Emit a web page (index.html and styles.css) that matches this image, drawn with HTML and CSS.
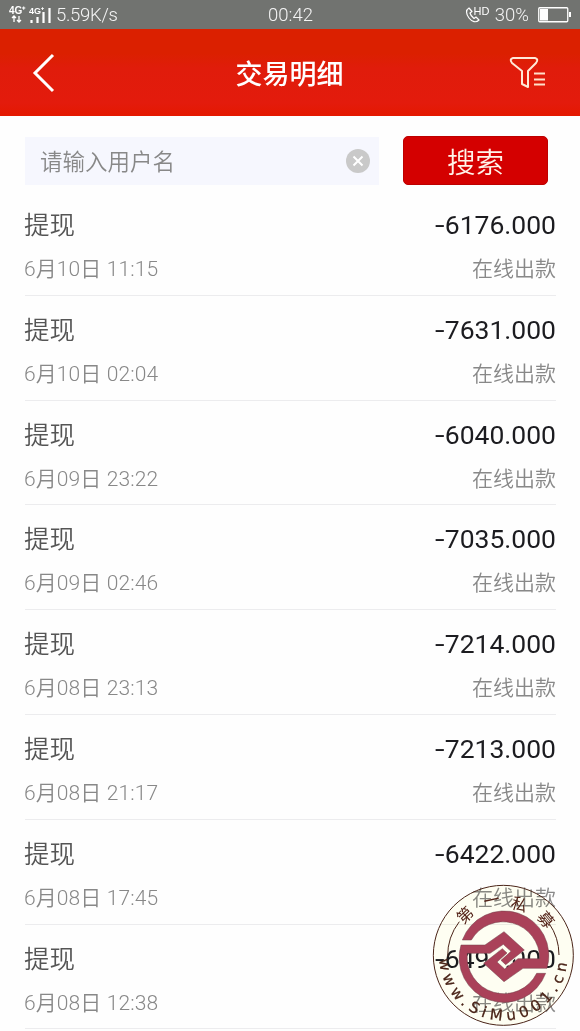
FILE: index.html
```html
<!DOCTYPE html>
<html lang="zh-CN">
<head>
<meta charset="utf-8">
<title>交易明细</title>
<link rel="stylesheet" href="styles.css">
</head>
<body>
<div class="screen">
  <div class="status">
    <div class="status-left">
      <svg class="signal" width="42" height="20" viewBox="0 0 42 20">
        <text class="g4" x="0" y="9">4G⁺</text>
        <text class="g4 g4-small" x="20" y="9">4G⁺</text>
        <path d="M5 11v6M3 13l2-2 2 2M10 11v6M8 15l2 2 2-2" stroke="#fff" stroke-width="1.300" fill="none"/>
        <path d="M22.500 15v3M28.500 12v6M34.500 7v11M40.500 3v15" stroke="#fff" stroke-width="2.200" fill="none"/>
      </svg>
      <span class="speed">5.59K/s</span>
    </div>
    <span class="clock">00:42</span>
    <div class="status-right">
      <svg class="call" width="24" height="18" viewBox="0 0 24 18">
        <path d="M4 2C.5 4 1 8 4 12s7 5 10 2l-3-3-2 1.500C7 11 5.500 9 5 7l2-1.500z" fill="none" stroke="#fff" stroke-width="1.200" stroke-linejoin="round"/>
        <text class="hd" x="8.500" y="9">HD</text>
      </svg>
      <span class="percent">30%</span>
      <svg class="battery" width="34" height="16" viewBox="0 0 34 16">
        <rect x=".75" y=".75" width="29" height="14" rx="1" fill="none" stroke="#fff" stroke-width="1.300"/>
        <path d="M2 2h8v11.500H2z" fill="#fff"/><path d="M31 5h2v5h-2z" fill="#fff"/>
      </svg>
    </div>
  </div>
  <header class="header">
    <svg class="back" width="24" height="40" viewBox="0 0 24 40"><path d="M21 2L3 20l18 18" fill="none" stroke="#fff" stroke-width="3"/></svg>
    <h1 class="title">交易明细</h1>
    <svg class="filter" width="38" height="34" viewBox="0 0 38 34">
      <path d="M4 2h22q4 1 1 5l-8 8v16l-6-3V15L3 7Q0 3 4 2z" fill="none" stroke="#ffe9d8" stroke-width="2" stroke-linejoin="round"/>
      <path d="M25 17.500h11M25 23.500h11M25 28.500h11" stroke="#ffe0ca" stroke-width="2"/>
    </svg>
  </header>
  <form class="search">
    <div class="field">
      <span>请输入用户名</span>
      <svg width="24" height="24" viewBox="0 0 24 24"><circle cx="12" cy="12" r="12" fill="#c9c9c9"/><path d="M7.500 7.500l9 9M16.500 7.500l-9 9" stroke="#fff" stroke-width="2"/></svg>
    </div>
    <button class="submit" type="button">搜索</button>
  </form>
  <main class="list">
    <div class="row"><div class="line"><span class="kind">提现</span><span class="amount"><i class="minus">-</i>6176.000</span></div><div class="line sub"><span class="date">6月10日 11:15</span><span class="note">在线出款</span></div></div>
    <div class="row"><div class="line"><span class="kind">提现</span><span class="amount"><i class="minus">-</i>7631.000</span></div><div class="line sub"><span class="date">6月10日 02:04</span><span class="note">在线出款</span></div></div>
    <div class="row"><div class="line"><span class="kind">提现</span><span class="amount"><i class="minus">-</i>6040.000</span></div><div class="line sub"><span class="date">6月09日 23:22</span><span class="note">在线出款</span></div></div>
    <div class="row"><div class="line"><span class="kind">提现</span><span class="amount"><i class="minus">-</i>7035.000</span></div><div class="line sub"><span class="date">6月09日 02:46</span><span class="note">在线出款</span></div></div>
    <div class="row"><div class="line"><span class="kind">提现</span><span class="amount"><i class="minus">-</i>7214.000</span></div><div class="line sub"><span class="date">6月08日 23:13</span><span class="note">在线出款</span></div></div>
    <div class="row"><div class="line"><span class="kind">提现</span><span class="amount"><i class="minus">-</i>7213.000</span></div><div class="line sub"><span class="date">6月08日 21:17</span><span class="note">在线出款</span></div></div>
    <div class="row"><div class="line"><span class="kind">提现</span><span class="amount"><i class="minus">-</i>6422.000</span></div><div class="line sub"><span class="date">6月08日 17:45</span><span class="note">在线出款</span></div></div>
    <div class="row"><div class="line"><span class="kind">提现</span><span class="amount"><i class="minus">-</i>6494.000</span></div><div class="line sub"><span class="date">6月08日 12:38</span><span class="note">在线出款</span></div></div>
  </main>
  <svg class="seal-base" width="160" height="156" viewBox="0 0 480 468"><circle cx="250" cy="241" r="210"/></svg>
  <svg class="seal" width="160" height="156" viewBox="0 0 480 468">
    <defs><path id="arc" d="M59 225A192 192 0 1 0 441 225"/></defs>
    <circle class="rim" cx="250" cy="241" r="210"/>
    <path class="rim" d="M83 245A167 167 0 0 1 118 140M387 145A167 167 0 0 1 417 240"/>
    <g transform="translate(105 90)">
      <path class="hollow" d="M86 175L145 122 208 135 149 190z"/>
      <g class="emblem">
        <path d="M18 120H90L147 80 208 135 152 179 138 166 168 139 145 118 105 145H37A110 110 0 0 0 245 205H272A134 134 0 0 1 18 120Z"/>
        <path d="M276 190H204L147 230 86 175 142 131 156 144 126 171 149 192 189 161H254A110 110 0 0 0 49 105H22A134 134 0 0 1 276 190Z"/>
      </g>
    </g>
    <g class="seal-cn">
      <text transform="translate(250 241) rotate(-43.500)" y="-149">第</text>
      <text transform="translate(250 241) rotate(-12)" y="-152">一</text>
      <text transform="translate(250 241) rotate(17.500)" y="-143">私</text>
      <text transform="translate(250 241) rotate(50)" y="-149">募</text>
    </g>
    <text class="seal-url"><textPath href="#arc" startOffset="28" textLength="575">www.SiMu001.cn</textPath></text>
  </svg>
</div>
</body>
</html>
```
FILE: styles.css
```css
* { box-sizing: border-box; }
body { margin: 0; background: #fff; font-family: Roboto, "Noto Sans CJK SC", sans-serif; font-weight: 350; }
.screen { position: relative; width: 580px; height: 1031px; overflow: hidden; background: #fefefe; }
.status { display: grid; grid-template-columns: 1fr auto 1fr; align-items: center; height: 29px; padding: 1px 8px 0 9px; background: #717370; color: #f4f4f4; font-size: 18.500px; }
.status-left, .status-right { display: flex; align-items: center; }
.status-left { gap: 5px; }
.status-right { justify-content: flex-end; }
.speed { letter-spacing: -.3px; }
.g4 { font: 700 10px "Liberation Sans", sans-serif; fill: #fff; }
.g4-small { font-size: 9px; }
.hd { font: 400 11px "Liberation Sans", sans-serif; fill: #fff; }
.percent { margin: 0 9px 0 6px; }
.header { display: flex; align-items: center; justify-content: space-between; height: 87px; padding: 0 33px 0 32px; background: linear-gradient(#db2000 0, #db2000 28%, #e01c0b 45%, #e31b0c 85%, #e41800); }
.title { margin: 4px 0 0 14px; color: #fff; font-size: 27px; font-weight: 500; line-height: 40px; }
.search { display: flex; justify-content: space-between; align-items: center; margin: 20px 32px 6px 25px; height: 49px; }
.field { display: flex; align-items: center; justify-content: space-between; width: 354px; height: 48px; padding: 0 9px 0 15px; background: #f6f7fe; color: #888; font-size: 22.500px; }
.field span { margin-top: -2px; }
.submit { width: 145px; height: 49px; padding: 0; border: 1px solid #bd0000; border-radius: 5px; background: #d40000; color: #fff4ea; font: 350 28.500px "Noto Sans CJK SC", sans-serif; }
.list { padding: 0 24px 0 25px; }
.row { display: flex; flex-direction: column; height: 104.800px; padding: 13px 0 1px; border-bottom: 1px solid #ececee; }
.line { display: flex; flex: none; align-items: center; justify-content: space-between; height: 40px; color: #555; font-size: 25.500px; }
.kind { margin: -3px 0 0 -1px; }
.amount { margin-top: 1px; color: #1c1c20; font-size: 26.500px; font-weight: 400; }
.minus { display: inline-block; font-style: normal; transform: scaleX(1.300); margin-right: 1px; }
.sub { height: 48px; padding-bottom: 2px; color: #888; font-size: 21px; }
.date { margin-left: -1px; letter-spacing: .1px; }
.seal, .seal-base { position: absolute; left: 420px; top: 875px; }
.seal-base { fill: #fffff3; mix-blend-mode: multiply; }
.rim { fill: none; stroke: #4a2418; stroke-width: 3; }
.hollow { fill: #fffff0; }
.emblem { fill: #aa4159; stroke: #70404a; stroke-width: 1.500; }
.seal-cn { font: 400 48px "Noto Sans CJK SC", sans-serif; fill: #542318; text-anchor: middle; }
.seal-url { font: 400 45px "DejaVu Sans", sans-serif; fill: #4a2418; stroke: #4a2418; stroke-width: .8; }
```
